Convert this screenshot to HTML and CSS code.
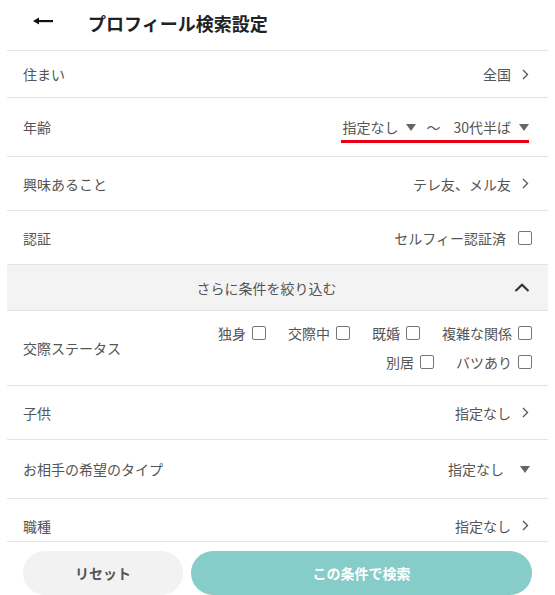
FILE: index.html
```html
<!DOCTYPE html>
<html lang="ja">
<head>
<meta charset="utf-8">
<title>プロフィール検索設定</title>
<link rel="stylesheet" href="styles.css">
</head>
<body>
<div class="page">
  <header class="header">
    <svg class="back" width="20" height="10" viewBox="0 0 20 10"><path d="M0 5 L6 1.5 L6 8.5 Z" fill="#111"/><rect x="4" y="4" width="16" height="2.2" fill="#111"/></svg>
    <h1 class="title">プロフィール検索設定</h1>
  </header>

  <div class="row row-short">
    <span class="label">住まい</span>
    <span class="value">全国<svg class="chev" width="7" height="11" viewBox="0 0 7 11"><path d="M1 1 L5.5 5.5 L1 10" fill="none" stroke="#555" stroke-width="1.3"/></svg></span>
  </div>

  <div class="row row-tall">
    <span class="label">年齢</span>
    <span class="age">
      <span>指定なし</span><svg class="tri" width="10" height="7" viewBox="0 0 10 7"><path d="M0 0 H10 L5 7 Z" fill="#666"/></svg>
      <span class="tilde">〜</span>
      <span>30代半ば</span><svg class="tri" width="10" height="7" viewBox="0 0 10 7"><path d="M0 0 H10 L5 7 Z" fill="#666"/></svg>
    </span>
  </div>

  <div class="row">
    <span class="label">興味あること</span>
    <span class="value">テレ友、メル友<svg class="chev" width="7" height="11" viewBox="0 0 7 11"><path d="M1 1 L5.5 5.5 L1 10" fill="none" stroke="#555" stroke-width="1.3"/></svg></span>
  </div>

  <div class="row">
    <span class="label">認証</span>
    <span class="value">セルフィー認証済<span class="box box-wide"></span></span>
  </div>

  <div class="more">
    <span class="more-text">さらに条件を絞り込む</span>
    <svg class="up" width="16" height="9" viewBox="0 0 16 9"><path d="M1.5 8 L8 1.8 L14.5 8" fill="none" stroke="#333" stroke-width="2.2"/></svg>
  </div>

  <div class="row row-status">
    <span class="label">交際ステータス</span>
    <div class="checks">
      <span class="check">独身<span class="box"></span></span>
      <span class="check">交際中<span class="box"></span></span>
      <span class="check">既婚<span class="box"></span></span>
      <span class="check">複雑な関係<span class="box"></span></span>
      <span class="check">別居<span class="box"></span></span>
      <span class="check">バツあり<span class="box"></span></span>
    </div>
  </div>

  <div class="row">
    <span class="label">子供</span>
    <span class="value">指定なし<svg class="chev" width="7" height="11" viewBox="0 0 7 11"><path d="M1 1 L5.5 5.5 L1 10" fill="none" stroke="#555" stroke-width="1.3"/></svg></span>
  </div>

  <div class="row row-tall">
    <span class="label">お相手の希望のタイプ</span>
    <span class="value">指定なし<svg class="tri tri-end" width="10" height="7" viewBox="0 0 10 7"><path d="M0 0 H10 L5 7 Z" fill="#666"/></svg></span>
  </div>

  <div class="row">
    <span class="label">職種</span>
    <span class="value">指定なし<svg class="chev" width="7" height="11" viewBox="0 0 7 11"><path d="M1 1 L5.5 5.5 L1 10" fill="none" stroke="#555" stroke-width="1.3"/></svg></span>
  </div>
</div>

<div class="actions">
  <button class="btn btn-reset">リセット</button>
  <button class="btn btn-search">この条件で検索</button>
</div>
</body>
</html>
```

FILE: styles.css
```css
* { box-sizing: border-box; }
html, body { margin: 0; padding: 0; background: #fff; }
body {
  font-family: "Noto Sans CJK JP", "Noto Sans", sans-serif;
  font-size: 14px;
  color: #555;
  line-height: 20px;
}
.page { margin: 0 7px; padding-bottom: 60px; }

.header {
  height: 51px;
  display: flex;
  align-items: center;
  padding-left: 26px;
  padding-bottom: 5px;
  border-bottom: 1px solid #e4e4e4;
}
.back { display: block; margin-top: -3px; }
.title {
  margin: 0 0 0 35px;
  font-size: 18px;
  font-weight: 700;
  color: #222;
  line-height: 24px;
}

.row {
  display: flex;
  align-items: center;
  justify-content: space-between;
  height: 54px;
  padding: 0 16px;
  border-bottom: 1px solid #e4e4e4;
}
.row-short { height: 47px; }
.row-tall { height: 59px; }
.row-status { height: 75px; align-items: center; }

.label { color: #555; }
.value { display: flex; align-items: center; color: #555; }
.chev { margin-left: 11px; margin-right: 3px; display: block; }
.tri { display: block; margin-left: 8px; }
.tri-end { margin-left: 16px; margin-right: 2px; }

.age {
  display: flex;
  align-items: center;
  padding: 6px 0 3px 1px;
  border-bottom: 3px solid #e60012;
  margin-right: 3px;
}
.tilde { margin: 0 13px 0 10px; }

.box {
  display: inline-block;
  width: 14px;
  height: 14px;
  border: 1px solid #777;
  border-radius: 2px;
  background: #fff;
  margin-left: 6px;
}
.box-wide { margin-left: 12px; }

.more {
  display: flex;
  align-items: center;
  height: 46px;
  padding: 0 18px 0 16px;
  background: #f4f3f3;
  border-bottom: 1px solid #e4e4e4;
}
.more-text { flex: 1; text-align: center; color: #555; padding-left: 12px; }
.up { display: block; margin-left: 16px; }

.checks {
  width: 320px;
  display: flex;
  flex-wrap: wrap;
  justify-content: flex-end;
  column-gap: 22px;
  row-gap: 9px;
  margin-top: -2px;
}
.check { display: flex; align-items: center; }

.actions {
  position: fixed;
  left: 7px;
  right: 7px;
  bottom: 0;
  height: 54px;
  background: #fff;
  border-top: 1px solid #e4e4e4;
  display: flex;
  gap: 8px;
  padding: 9px 16px 0;
}
.btn {
  height: 44px;
  border: none;
  border-radius: 22px;
  font-family: "Noto Sans CJK JP", "Noto Sans", sans-serif;
  font-size: 14px;
  font-weight: 700;
  cursor: pointer;
}
.btn-reset { width: 160px; background: #f3f2f2; color: #555; }
.btn-search { flex: 1; background: #86ccc8; color: #fff; }
```
